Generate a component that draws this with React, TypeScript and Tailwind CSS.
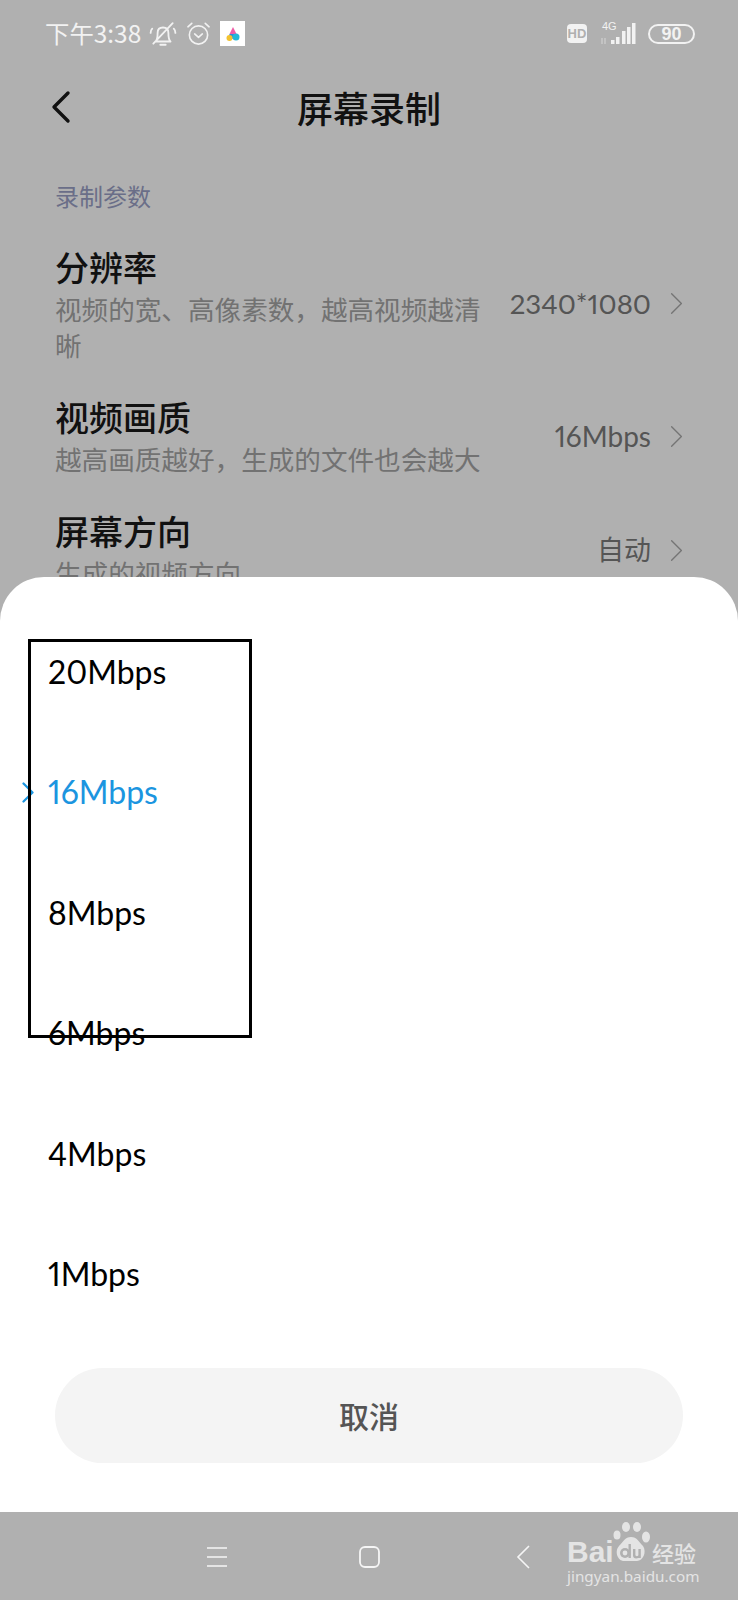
import React from "react";

const cjk = { fontFamily: '"Noto Sans CJK SC", sans-serif' };
const lato = { fontFamily: 'Lato, "Noto Sans CJK SC", sans-serif' };
const arial = { fontFamily: '"Liberation Sans", sans-serif' };

function Chevron({ className, w = 1.7 }: { className: string; w?: number }) {
  return (
    <svg className={className} viewBox="0 0 16 28" fill="none" stroke="currentColor" strokeWidth={w} strokeLinecap="round" strokeLinejoin="round">
      <path d="M2 2l12 12L2 26" />
    </svg>
  );
}

function Row({ title, sub, value, cls, valueSize }: { title: string; sub: React.ReactNode; value: string; cls: string; valueSize: string }) {
  return (
    <div className={`flex items-center pl-[55px] pr-[55px] ${cls}`}>
      <div className="flex-1 min-w-0 whitespace-nowrap">
        <div className="text-[34px] leading-[40px] font-medium text-[#111]">{title}</div>
        <div className="mt-[4px] text-[26.6px] leading-[36px] text-[#727272]">{sub}</div>
      </div>
      <div className="flex items-center -mt-[2px]">
        <div className={`${valueSize} text-[#555] whitespace-nowrap proportional-nums`} style={lato}>{value}</div>
        <Chevron className="w-[13px] h-[23px] ml-[19px] text-[#757575]" />
      </div>
    </div>
  );
}

const rates = ["20Mbps", "16Mbps", "8Mbps", "6Mbps", "4Mbps", "1Mbps"];

export default function App() {
  return (
    <div className="relative w-[738px] h-[1600px] overflow-hidden bg-[#b0b0b0] flex flex-col" style={cjk}>
      <div className="h-[67px] shrink-0 flex items-center pl-[45px] pr-[43px] text-[#f2f2f2]">
        <span className="text-[24.4px]">下午3:38</span>
        <svg className="w-[28px] h-[28px] ml-[8px]" viewBox="0 0 26 26" fill="none" stroke="currentColor" strokeWidth="1.7" strokeLinecap="round" strokeLinejoin="round">
          <path d="M6 20c2-2 2-5 2-8 0-3 2-5 5-5s5 2 5 5c0 3 0 6 2 8zM10.5 23h5M4 22L22 3M1.5 12c0-2 .5-3 1.5-4M24.5 12c0-2-.5-3-1.5-4" />
        </svg>
        <svg className="w-[25px] h-[25px] ml-[9px]" viewBox="0 0 26 26" fill="none" stroke="currentColor" strokeWidth="1.7" strokeLinecap="round" strokeLinejoin="round">
          <circle cx="13" cy="14.5" r="9.5" />
          <path d="M9 13.5l4 3.5 4-3.5M2 6l4-3.5M24 6l-4-3.5" />
        </svg>
        <div className="w-[25px] h-[25px] ml-[9px] bg-white flex items-center justify-center">
          <svg className="w-[16px] h-[16px]" viewBox="0 0 16 16">
            <path d="M8 1l3.5 7h-7z" fill="#ef5da8" />
            <path d="M4.5 8h7l1.5 3-5 2-4-2z" fill="#2a8cd8" />
            <circle cx="11" cy="11" r="3.5" fill="#21b8d8" />
            <circle cx="4.5" cy="12" r="3" fill="#f2c230" />
          </svg>
        </div>
        <div className="flex-1" />
        <div className="w-[20px] h-[19px] rounded-[4px] bg-[#f2f2f2] text-[#b0b0b0] text-[13px] leading-[19px] font-bold text-center" style={arial}>HD</div>
        <div className="relative w-[38px] h-[24px] ml-[13px] mr-[2px]">
          <span className="absolute left-[2px] -top-[2px] text-[11px] font-medium leading-[12px]" style={arial}>4G</span>
          <svg className="w-[38px] h-[24px]" viewBox="0 0 38 24" fill="currentColor">
            <rect x="11" y="18" width="3.5" height="4" />
            <rect x="16" y="15" width="3.5" height="7" />
            <rect x="22" y="9" width="3.5" height="13" />
            <rect x="27" y="5" width="3.5" height="17" />
            <rect x="32" y="1" width="3.5" height="21" />
            <path d="M2 22v-6M5 22v-6" stroke="currentColor" strokeWidth="1" opacity=".6" />
          </svg>
        </div>
        <div className="w-[47px] h-[20px] ml-[8px] rounded-full border-2 border-[#f2f2f2] text-[18px] leading-[16px] text-center font-bold" style={arial}>90</div>
      </div>

      <div className="h-[80px] shrink-0 grid grid-cols-[1fr_auto_1fr] items-center">
        <svg className="ml-[50px] w-[22px] h-[34px] text-[#111]" viewBox="0 0 22 34" fill="none" stroke="currentColor" strokeWidth="3.4" strokeLinecap="round" strokeLinejoin="round">
          <path d="M18 3L4 17l14 14" />
        </svg>
        <span className="text-[36px] leading-[80px] font-medium text-[#111]">屏幕录制</span>
        <span />
      </div>

      <div className="pl-[55px] mt-[31px] text-[24px] leading-[36px] text-[#6a6e88]">录制参数</div>

      <Row cls="mt-[33px]" valueSize="text-[27.6px]" title="分辨率" sub={<>视频的宽、高像素数，越高视频越清<br />晰</>} value="2340*1080" />
      <Row cls="mt-[34px]" valueSize="text-[28px]" title="视频画质" sub="越高画质越好，生成的文件也会越大" value="16Mbps" />
      <Row cls="mt-[34px]" valueSize="text-[27px]" title="屏幕方向" sub="生成的视频方向" value="自动" />

      <div className="absolute left-0 right-0 top-[577px] h-[935px] bg-white rounded-t-[44px] flex flex-col" style={lato}>
        <div className="pt-[35px] flex flex-col">
          {rates.map((r) => (
            <div key={r} className={`relative h-[120.4px] pl-[48px] text-[32px] leading-[120.4px] proportional-nums ${r === "16Mbps" ? "text-[#1b95e0]" : "text-black"}`}>
              {r === "16Mbps" && (
                <Chevron w={3} className="absolute left-[22px] top-[50px] w-[12px] h-[21px] text-[#1b95e0]" />
              )}
              {r}
            </div>
          ))}
        </div>
        <div className="mx-[55px] mt-[34px] h-[95px] rounded-full bg-[#f4f4f4] flex items-center justify-center text-[30px] font-medium text-[#555]" style={cjk}>取消</div>
      </div>

      <div className="absolute left-[28px] top-[639px] w-[224px] h-[399px] border-[3px] border-black" />

      <div className="absolute left-0 right-0 top-[1512px] h-[88px] bg-[#b0b0b0] text-[#f5f5f5] flex items-start pl-[205px] pt-[34px]">
        <svg className="w-[24px] h-[22px]" viewBox="0 0 24 22" stroke="currentColor" strokeWidth="1.6" fill="none">
          <path d="M2 2h20M2 11h20M2 20h20" />
        </svg>
        <svg className="w-[24px] h-[24px] ml-[129px] -mt-[1px]" viewBox="0 0 24 24" stroke="currentColor" strokeWidth="1.8" fill="none">
          <rect x="2" y="2" width="19" height="20" rx="5" />
        </svg>
        <svg className="w-[16px] h-[24px] ml-[134px] -mt-[1px]" viewBox="0 0 16 24" stroke="currentColor" strokeWidth="1.6" fill="none">
          <path d="M13 1L2 12l11 11" />
        </svg>
      </div>

      <div className="absolute left-[567px] top-[1522px] w-[134px] h-[62px] text-[#e4e4e4]">
        <div className="absolute left-0 top-[16px] text-[30px] leading-[28px] font-bold" style={arial}>Bai</div>
        <svg className="absolute left-[44px] top-0 w-[40px] h-[40px]" viewBox="0 0 40 40" fill="currentColor">
          <ellipse cx="6" cy="13" rx="3.5" ry="4.5" />
          <ellipse cx="15" cy="5" rx="4" ry="5" />
          <ellipse cx="26" cy="5" rx="4" ry="5" />
          <ellipse cx="35" cy="15" rx="4" ry="5.5" />
          <path d="M20 15c6 0 8 5 12 9 4 6 0 15-6 15H13C7 39 3 30 8 24c4-4 6-9 12-9z" />
          <circle cx="14" cy="31" r="5" fill="#b0b0b0" />
          <circle cx="14" cy="31" r="2.4" />
          <path d="M17.5 22h2.4v14h-2.4zM22 27h2.4v6c0 1.5 3 1.5 3 0v-6h2.4v9h-2.4c-3 1-5.4 0-5.4-2.5z" fill="#b0b0b0" />
        </svg>
        <div className="absolute left-[85px] top-[18px] text-[22px] leading-[24px] font-medium whitespace-nowrap" style={cjk}>经验</div>
        <div className="absolute left-0 top-[45px] text-[15.3px] leading-[18px] whitespace-nowrap" style={{ fontFamily: '"Noto Sans", sans-serif' }}>jingyan.baidu.com</div>
      </div>
    </div>
  );
}
